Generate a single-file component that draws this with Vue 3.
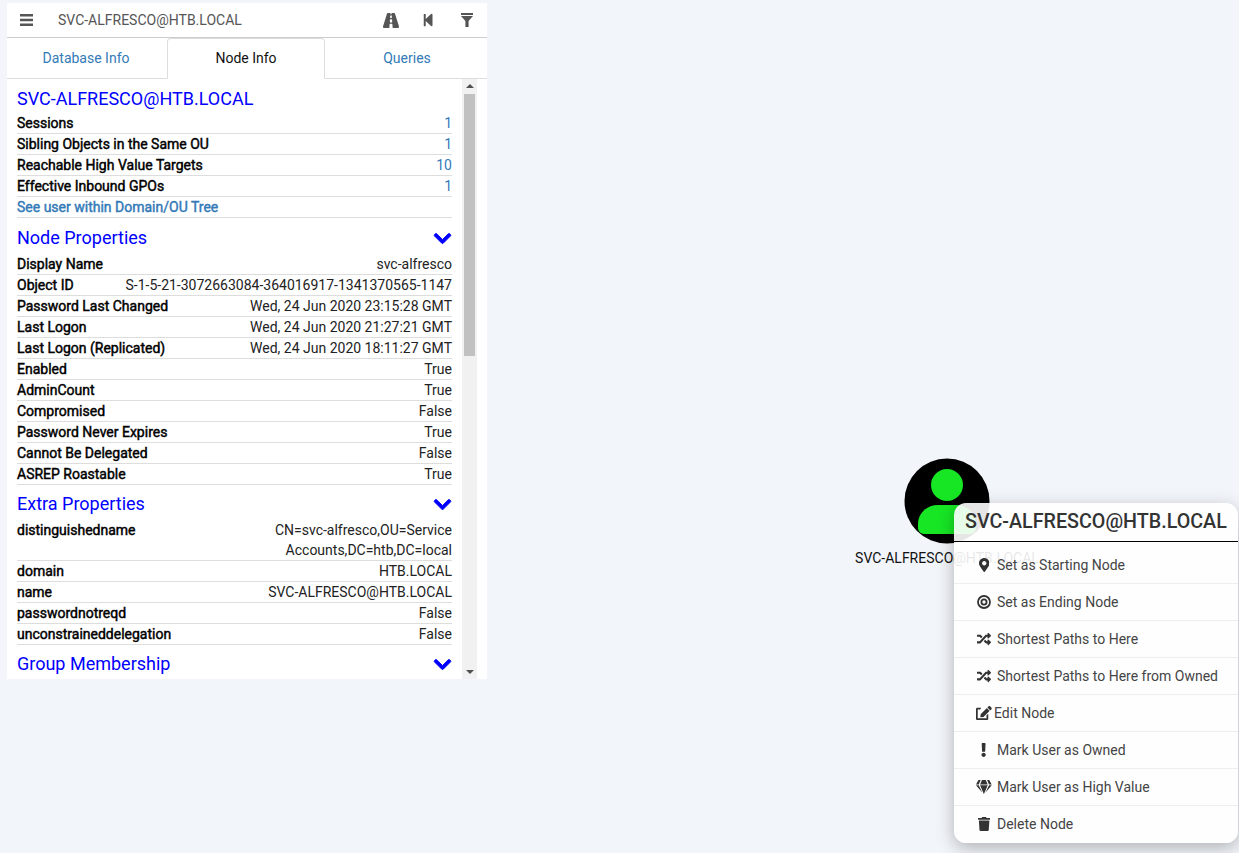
<template>
    <div class="page">
        <div class="panel">
            <div class="search-bar">
                <button class="bar-btn menu-btn">
                    <svg class="bars-icon" viewBox="0 0 13 12"><path d="M0 0h13v2.5H0zM0 4.8h13v2.5H0zM0 9.5h13V12H0z" /></svg>
                </button>
                <div class="search-text">SVC-ALFRESCO@HTB.LOCAL</div>
                <button class="bar-btn road-btn">
                    <svg class="road-icon" viewBox="0 64 576 384" preserveAspectRatio="none"><path d="M573.19 402.67l-139.79-320C428.43 71.29 417.6 64 405.68 64h-97.59l2.45 23.16c.5 4.72-3.21 8.84-7.96 8.84h-29.16c-4.75 0-8.46-4.12-7.96-8.84L267.91 64h-97.59c-11.93 0-22.76 7.29-27.73 18.67L2.8 402.67C-6.45 423.86 8.31 448 30.54 448h196.84l10.31-97.68c.86-8.14 7.72-14.32 15.91-14.32h68.8c8.19 0 15.05 6.18 15.91 14.32L348.62 448h196.84c22.23 0 36.99-24.14 27.73-45.33zM260.4 135.16a8 8 0 0 1 7.96-7.16h39.29c4.09 0 7.53 3.09 7.96 7.16l4.6 43.58c.75 7.09-4.81 13.26-11.93 13.26h-40.54c-7.13 0-12.68-6.17-11.93-13.26l4.59-43.58zM315.64 304h-55.29c-9.5 0-16.91-8.23-15.91-17.68l5.07-48c.86-8.14 7.72-14.32 15.91-14.32h45.15c8.19 0 15.05 6.18 15.91 14.32l5.07 48c1 9.45-6.41 17.68-15.91 17.68z" /></svg>
                </button>
                <button class="bar-btn back-btn">
                    <svg class="icon" viewBox="0 0 448 512"><path d="M64 468V44c0-6.6 5.4-12 12-12h48c6.6 0 12 5.4 12 12v176.4l195.5-181C352.1 22.3 384 36.6 384 64v384c0 27.4-31.9 41.7-52.5 24.6L136 292.7V468c0 6.6-5.4 12-12 12H76c-6.6 0-12-5.4-12-12z" /></svg>
                </button>
                <button class="bar-btn filter-btn">
                    <svg class="icon" viewBox="0 0 12 14"><path d="M0 0h12v2H0zM0 3h12L7.6 8v6H4.4V8z" /></svg>
                </button>
            </div>

            <div class="tabs">
                <div v-for="tab in tabs" :key="tab" class="tab" :class="{ active: tab === 'Node Info' }">{{ tab }}</div>
            </div>

            <div class="panel-body">
                <div class="scroll-content">
                    <h4 class="node-name">SVC-ALFRESCO@HTB.LOCAL</h4>
                    <div v-for="row in overview" :key="row.label" class="row">
                        <span class="label">{{ row.label }}</span>
                        <span class="count">{{ row.value }}</span>
                    </div>
                    <div class="row tree-link">See user within Domain/OU Tree</div>

                    <template v-for="section in sections" :key="section.title">
                        <div class="section-head">
                            <span>{{ section.title }}</span>
                            <svg class="chevron" viewBox="0 -40 448 512"><path d="M207.029 381.476L12.686 187.132c-9.373-9.373-9.373-24.569 0-33.941l22.667-22.667c9.357-9.357 24.522-9.375 33.901-.04L224 284.505l154.745-154.021c9.379-9.335 24.544-9.317 33.901.04l22.667 22.667c9.373 9.373 9.373 24.569 0 33.941L240.971 381.476c-9.373 9.372-24.569 9.372-33.942 0z" /></svg>
                        </div>
                        <div v-for="row in section.rows" :key="row.label" class="row">
                            <span class="label">{{ row.label }}</span>
                            <span class="value" :class="{ wrap: row.wrap }">{{ row.value }}</span>
                        </div>
                    </template>
                </div>

                <div class="scrollbar">
                    <div class="arrow up"></div>
                    <div class="track"><div class="thumb"></div></div>
                    <div class="arrow down"></div>
                </div>
            </div>
        </div>

        <!-- node on the graph canvas -->
        <div class="node">
            <svg class="node-icon" viewBox="0 0 86 86">
                <circle cx="43" cy="43" r="42.5" fill="#000" />
                <circle cx="43" cy="27" r="16" fill="#17e625" />
                <path d="M14 70v-4c0-11 9-19 20-19h18c11 0 20 8 20 19v4c0 3-3 6-6 6H20c-3 0-6-3-6-6z" fill="#17e625" />
            </svg>
            <div class="node-label">SVC-ALFRESCO@HTB.LOCAL</div>
        </div>

        <div class="context-menu">
            <div class="menu-title">SVC-ALFRESCO@HTB.LOCAL</div>
            <div class="menu-list">
                <div v-for="item in menuItems" :key="item.text" class="menu-item">
                    <span class="menu-icon" :class="{ tight: item.tight }">
                        <svg v-if="item.d" :viewBox="item.box" :style="{ height: item.size + 'px' }"><path :d="item.d" /></svg>
                        <svg v-else viewBox="0 0 14 14" :style="{ height: item.size + 'px' }">
                            <circle cx="7" cy="7" r="6" fill="none" stroke="#333" stroke-width="1.8" />
                            <circle cx="7" cy="7" r="2.6" fill="none" stroke="#333" stroke-width="1.8" />
                        </svg>
                    </span>
                    <span>{{ item.text }}</span>
                </div>
            </div>
        </div>
    </div>
</template>

<script setup>
const tabs = ['Database Info', 'Node Info', 'Queries'];

const overview = [
    { label: 'Sessions', value: 1 },
    { label: 'Sibling Objects in the Same OU', value: 1 },
    { label: 'Reachable High Value Targets', value: 10 },
    { label: 'Effective Inbound GPOs', value: 1 },
];

const sections = [
    {
        title: 'Node Properties',
        rows: [
            { label: 'Display Name', value: 'svc-alfresco' },
            { label: 'Object ID', value: 'S-1-5-21-3072663084-364016917-1341370565-1147' },
            { label: 'Password Last Changed', value: 'Wed, 24 Jun 2020 23:15:28 GMT' },
            { label: 'Last Logon', value: 'Wed, 24 Jun 2020 21:27:21 GMT' },
            { label: 'Last Logon (Replicated)', value: 'Wed, 24 Jun 2020 18:11:27 GMT' },
            { label: 'Enabled', value: 'True' },
            { label: 'AdminCount', value: 'True' },
            { label: 'Compromised', value: 'False' },
            { label: 'Password Never Expires', value: 'True' },
            { label: 'Cannot Be Delegated', value: 'False' },
            { label: 'ASREP Roastable', value: 'True' },
        ],
    },
    {
        title: 'Extra Properties',
        rows: [
            { label: 'distinguishedname', value: 'CN=svc-alfresco,OU=Service Accounts,DC=htb,DC=local', wrap: true },
            { label: 'domain', value: 'HTB.LOCAL' },
            { label: 'name', value: 'SVC-ALFRESCO@HTB.LOCAL' },
            { label: 'passwordnotreqd', value: 'False' },
            { label: 'unconstraineddelegation', value: 'False' },
        ],
    },
    { title: 'Group Membership', rows: [] },
];

const randomPath = 'M504.971 359.029c9.373 9.373 9.373 24.569 0 33.941l-80 79.984c-15.01 15.01-40.971 4.49-40.971-16.971V416h-58.785a12.004 12.004 0 0 1-8.773-3.812l-70.556-75.596 53.333-57.143L352 336h32v-39.981c0-21.438 25.943-31.998 40.971-16.971l80 79.981zM12 176h84l52.781 56.551 53.333-57.143-70.556-75.596A11.999 11.999 0 0 0 122.785 96H12c-6.627 0-12 5.373-12 12v56c0 6.627 5.373 12 12 12zm372 0v39.984c0 21.46 25.961 31.98 40.971 16.971l80-79.984c9.373-9.373 9.373-24.569 0-33.941l-80-79.981C409.943 24.021 384 34.582 384 56.019V96h-58.785a12.004 12.004 0 0 0-8.773 3.812L96 336H12c-6.627 0-12 5.373-12 12v56c0 6.627 5.373 12 12 12h110.785c3.326 0 6.503-1.381 8.773-3.812L352 176h32z';

const menuItems = [
    {
        text: 'Set as Starting Node', box: '0 0 384 512', size: 14,
        d: 'M172.268 501.67C26.97 291.031 0 268.413 0 192 0 85.961 85.961 0 192 0s192 85.961 192 192c0 76.413-26.97 99.031-172.268 309.67-9.535 13.774-29.93 13.773-39.464 0zM192 272c44.183 0 80-35.817 80-80s-35.817-80-80-80-80 35.817-80 80 35.817 80 80 80z',
    },
    { text: 'Set as Ending Node', size: 14 },
    { text: 'Shortest Paths to Here', box: '0 0 512 512', size: 14, d: randomPath },
    { text: 'Shortest Paths to Here from Owned', box: '0 0 512 512', size: 14, d: randomPath },
    {
        text: 'Edit Node', box: '0 0 576 512', size: 14, tight: true,
        d: 'M402.6 83.2l90.2 90.2c3.8 3.8 3.8 10 0 13.8L274.4 405.6l-92.8 10.3c-12.4 1.4-22.9-9.1-21.5-21.5l10.3-92.8L388.8 83.2c3.8-3.8 10-3.8 13.8 0zm162-22.9l-48.8-48.8c-15.2-15.2-39.9-15.2-55.2 0l-35.4 35.4c-3.8 3.8-3.8 10 0 13.8l90.2 90.2c3.8 3.8 10 3.8 13.8 0l35.4-35.4c15.2-15.3 15.2-40 0-55.2zM384 346.2V448H64V128h73.2c3.2 0 6.2-1.3 8.5-3.5l40-40c7.6-7.6 2.2-20.5-8.5-20.5H48C21.5 64 0 85.5 0 112v352c0 26.5 21.5 48 48 48h352c26.5 0 48-21.5 48-48V306.2c0-10.7-12.9-16-20.5-8.5l-40 40c-2.2 2.3-3.5 5.3-3.5 8.5z',
    },
    {
        text: 'Mark User as Owned', box: '0 0 192 512', size: 14,
        d: 'M176 432c0 44.112-35.888 80-80 80s-80-35.888-80-80 35.888-80 80-80 80 35.888 80 80zM25.26 25.199l13.6 272C39.499 309.972 50.041 320 62.83 320h66.34c12.789 0 23.331-10.028 23.97-22.801l13.6-272C167.425 11.49 156.496 0 142.77 0H49.23C35.504 0 24.575 11.49 25.26 25.199z',
    },
    {
        text: 'Mark User as High Value', box: '0 0 576 512', size: 14,
        d: 'M485.5 0L576 160H474.9L405.7 0h79.8zm-128 0l69.2 160H149.3L218.5 0h139zm-267 0h79.8l-69.2 160H0L90.5 0zM0 192h100.7l123 251.7c1.5 3.1-2.7 5.9-5 3.3L0 192zm148.2 0h279.6l-137 318.2c-1 2.4-4.5 2.4-5.5 0L148.2 192zm204.1 251.7l123-251.7H576L357.3 446.9c-2.3 2.7-6.5-.1-5-3.2z',
    },
    {
        text: 'Delete Node', box: '0 0 448 512', size: 14,
        d: 'M432 32H312l-9.4-18.7A24 24 0 0 0 281.1 0H166.8a23.72 23.72 0 0 0-21.4 13.3L136 32H16A16 16 0 0 0 0 48v32a16 16 0 0 0 16 16h416a16 16 0 0 0 16-16V48a16 16 0 0 0-16-16zM53.2 467a48 48 0 0 0 47.9 45h245.8a48 48 0 0 0 47.9-45L416 128H32z',
    },
];
</script>

<style>
body {
    background: #f2f5fa;
    overflow: hidden;
}
</style>

<style scoped>
.page {
    position: relative;
    width: 1239px;
    height: 853px;
    padding: 3px 0 0 7px;
    box-sizing: border-box;
    font-family: Roboto, "Liberation Sans", sans-serif;
    font-size: 14px;
    color: #000;
}

.panel {
    width: 480px;
    background: #fff;
}

.search-bar {
    display: flex;
    align-items: center;
    height: 34px;
    border-bottom: 1px solid #ccc;
    color: #555;
}

.bar-btn {
    display: flex;
    align-items: center;
    justify-content: center;
    padding: 0;
    border: 0;
    background: none;
    flex: none;
}

.icon {
    height: 14px;
    fill: #555;
}

.bars-icon {
    width: 13px;
    height: 12px;
    fill: #555;
}

.road-icon {
    width: 16px;
    height: 15px;
    fill: #555;
}

.menu-btn {
    width: 39px;
}

.search-text {
    flex: 1;
    padding-left: 12px;
    font-size: 14px;
    color: #555;
}

.road-btn {
    width: 17px;
}

.back-btn {
    margin-left: 22px;
    width: 14px;
}

.filter-btn {
    margin: 0 13px 0 25px;
    width: 14px;
}

.tabs {
    display: flex;
    height: 40px;
    border-bottom: 1px solid #ddd;
}

.tab {
    width: 158px;
    flex: none;
    box-sizing: border-box;
    display: flex;
    align-items: center;
    justify-content: center;
    padding-bottom: 2px;
    color: #337ab7;
    margin: 0 2px -1px 0;
    border: 1px solid transparent;
}

.tab:last-child {
    width: 160px;
    margin-right: 0;
}

.tab.active {
    color: #111;
    border-color: #ddd;
    border-bottom-color: #fff;
    border-radius: 4px 4px 0 0;
}

.panel-body {
    display: flex;
    height: 600px;
    overflow: hidden;
}

.scroll-content {
    width: 435px;
    padding: 0 10px;
    flex: none;
}

.node-name {
    margin: 9px 0 3px;
    font-size: 18px;
    font-weight: 400;
    line-height: 22px;
    color: #0000ff;
}

.row {
    display: flex;
    justify-content: space-between;
    align-items: flex-start;
    line-height: 20px;
    border-bottom: 1px solid #ddd;
}

.label {
    font-weight: 400;
    flex: none;
    -webkit-text-stroke: 0.45px #000;
}

.count {
    color: #337ab7;
}

.value {
    text-align: right;
    color: #222;
}

.value.wrap {
    width: 210px;
}

.tree-link {
    color: #337ab7;
    -webkit-text-stroke: 0.45px #337ab7;
}

.section-head {
    display: flex;
    justify-content: space-between;
    align-items: center;
    height: 22px;
    margin: 8px 0 6px;
    font-size: 18px;
    color: #0000ff;
}

.row + .section-head {
    margin-top: 7px;
}

.tree-link + .section-head {
    margin-top: 8px;
}

.chevron {
    width: 17px;
    height: 20px;
    margin-right: 1px;
    fill: #0000ff;
    stroke: #0000ff;
    stroke-width: 26;
    overflow: visible;
}

.scrollbar {
    display: flex;
    flex-direction: column;
    width: 15px;
    background: #f1f1f1;
    flex: none;
}

.arrow {
    height: 15px;
    flex: none;
    position: relative;
}

.arrow::after {
    content: "";
    position: absolute;
    left: 3.5px;
    border-left: 4px solid transparent;
    border-right: 4px solid transparent;
}

.arrow.up::after {
    top: 5px;
    border-bottom: 4px solid #505050;
}

.arrow.down::after {
    top: 6px;
    border-top: 4px solid #505050;
}

.track {
    flex: 1;
    padding: 0 2px;
}

.thumb {
    height: 262px;
    background: #c1c1c1;
}

.node {
    position: absolute;
    left: 847px;
    top: 458px;
    width: 200px;
    display: flex;
    flex-direction: column;
    align-items: center;
}

.node-icon {
    width: 86px;
    height: 86px;
    display: block;
}

.node-label {
    margin-top: 5px;
    line-height: 18px;
    color: #111;
    white-space: nowrap;
}

.context-menu {
    position: absolute;
    left: 954px;
    top: 503px;
    width: 284px;
    background: rgba(255, 255, 255, 0.9);
    border-radius: 12px;
    box-shadow: 0 5px 18px rgba(0, 0, 0, 0.28);
    color: #333;
    overflow: hidden;
}

.menu-title {
    height: 38px;
    line-height: 38px;
    padding-left: 11px;
    font-size: 19.7px;
    font-weight: 500;
    white-space: nowrap;
    border-bottom: 1px solid #000;
}

.menu-list {
    padding: 5px 0 1px;
    color: #444;
}

.menu-item {
    display: flex;
    align-items: center;
    height: 36px;
    border-bottom: 1px solid #eee;
}

.menu-item:last-child {
    border-bottom: 0;
}

.menu-icon {
    display: flex;
    justify-content: center;
    width: 18px;
    margin: 0 4px 0 21px;
    flex: none;
}

.menu-icon.tight {
    width: 16px;
    margin: 0 2px 0 22px;
    justify-content: flex-start;
}

.menu-icon svg {
    display: block;
    fill: #333;
}
</style>
